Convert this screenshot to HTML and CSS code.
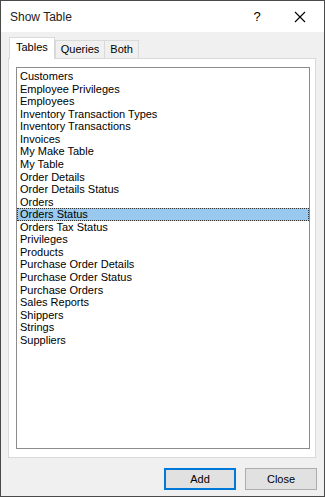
FILE: index.html
```html
<!DOCTYPE html>
<html lang="en">
<head>
    <meta charset="UTF-8">
    <title>Show Table</title>
    <link rel="stylesheet" href="styles.css">
</head>
<body>
    <div class="dialog">
        <div class="title-bar">
            <div class="title">Show Table</div>
            <div class="title-help">?</div>
            <div class="title-close">
                <svg width="12" height="12" viewBox="0 0 12 12"><path d="M1 1 L11 11 M11 1 L1 11" stroke="#000" stroke-width="1.1" fill="none"/></svg>
            </div>
        </div>
        <div class="body">
            <div class="tabs">
                <div class="tab active">Tables</div>
                <div class="tab">Queries</div>
                <div class="tab">Both</div>
            </div>
            <div class="panel">
                <div class="list">
                    <div class="item">Customers</div>
                    <div class="item">Employee Privileges</div>
                    <div class="item">Employees</div>
                    <div class="item">Inventory Transaction Types</div>
                    <div class="item">Inventory Transactions</div>
                    <div class="item">Invoices</div>
                    <div class="item">My Make Table</div>
                    <div class="item">My Table</div>
                    <div class="item">Order Details</div>
                    <div class="item">Order Details Status</div>
                    <div class="item">Orders</div>
                    <div class="item selected">Orders Status</div>
                    <div class="item">Orders Tax Status</div>
                    <div class="item">Privileges</div>
                    <div class="item">Products</div>
                    <div class="item">Purchase Order Details</div>
                    <div class="item">Purchase Order Status</div>
                    <div class="item">Purchase Orders</div>
                    <div class="item">Sales Reports</div>
                    <div class="item">Shippers</div>
                    <div class="item">Strings</div>
                    <div class="item">Suppliers</div>
                </div>
            </div>
            <div class="buttons">
                <button class="btn default">Add</button>
                <button class="btn">Close</button>
            </div>
        </div>
    </div>
</body>
</html>
```

FILE: styles.css
```css
* {
    margin: 0;
    padding: 0;
    box-sizing: border-box;
}

body {
    width: 325px;
    height: 497px;
    font-family: 'Liberation Sans', Arial, sans-serif;
    font-size: 11px;
    color: #000;
}

.dialog {
    width: 325px;
    height: 497px;
    border: 1px solid #4a4a4a;
    background: #f0f0f0;
    display: flex;
    flex-direction: column;
}

.title-bar {
    height: 31px;
    background: #fff;
    display: flex;
    align-items: center;
    padding-left: 9px;
}

.title {
    flex: 1;
    font-size: 12px;
    color: #222;
}

.title-help {
    width: 16px;
    font-size: 13px;
    margin-right: 29px;
    text-align: center;
}

.title-close {
    width: 12px;
    height: 12px;
    margin-right: 18px;
    display: flex;
}

.body {
    flex: 1;
    padding: 5px 8px 0 7px;
    display: flex;
    flex-direction: column;
}

.tabs {
    display: flex;
    align-items: flex-end;
    height: 21px;
    padding-left: 1px;
    position: relative;
    z-index: 1;
}

.tab {
    height: 18px;
    padding: 0 5px;
    border: 1px solid #d9d9d9;
    border-bottom: none;
    background: #f0f0f0;
    line-height: 17px;
    margin-left: -1px;
}

.tab.active {
    height: 22px;
    margin-bottom: -1px;
    padding: 0 6px;
    background: #fff;
    line-height: 19px;
    margin-left: 0;
    margin-right: 1px;
}

.panel {
    height: 400px;
    border: 1px solid #d9d9d9;
    background: #fff;
    padding: 8px 5px 8px 7px;
}

.list {
    height: 100%;
    border: 1px solid #8c8c8c;
    background: #fff;
    padding: 2px 0;
}

.item {
    height: 12.57px;
    line-height: 12.57px;
    padding-left: 3px;
    white-space: nowrap;
}

.item.selected {
    background: #99c9ef;
    outline: 1px dotted #333;
    outline-offset: -1px;
}

.buttons {
    display: flex;
    justify-content: flex-end;
    gap: 9px;
    padding-top: 10px;
    margin-right: -1px;
}

.btn {
    width: 72px;
    height: 22px;
    background: #e1e1e1;
    border: 1px solid #adadad;
    font-family: 'Liberation Sans', Arial, sans-serif;
    font-size: 11px;
    color: #000;
}

.btn.default {
    border: 2px solid #0078d7;
}
```
